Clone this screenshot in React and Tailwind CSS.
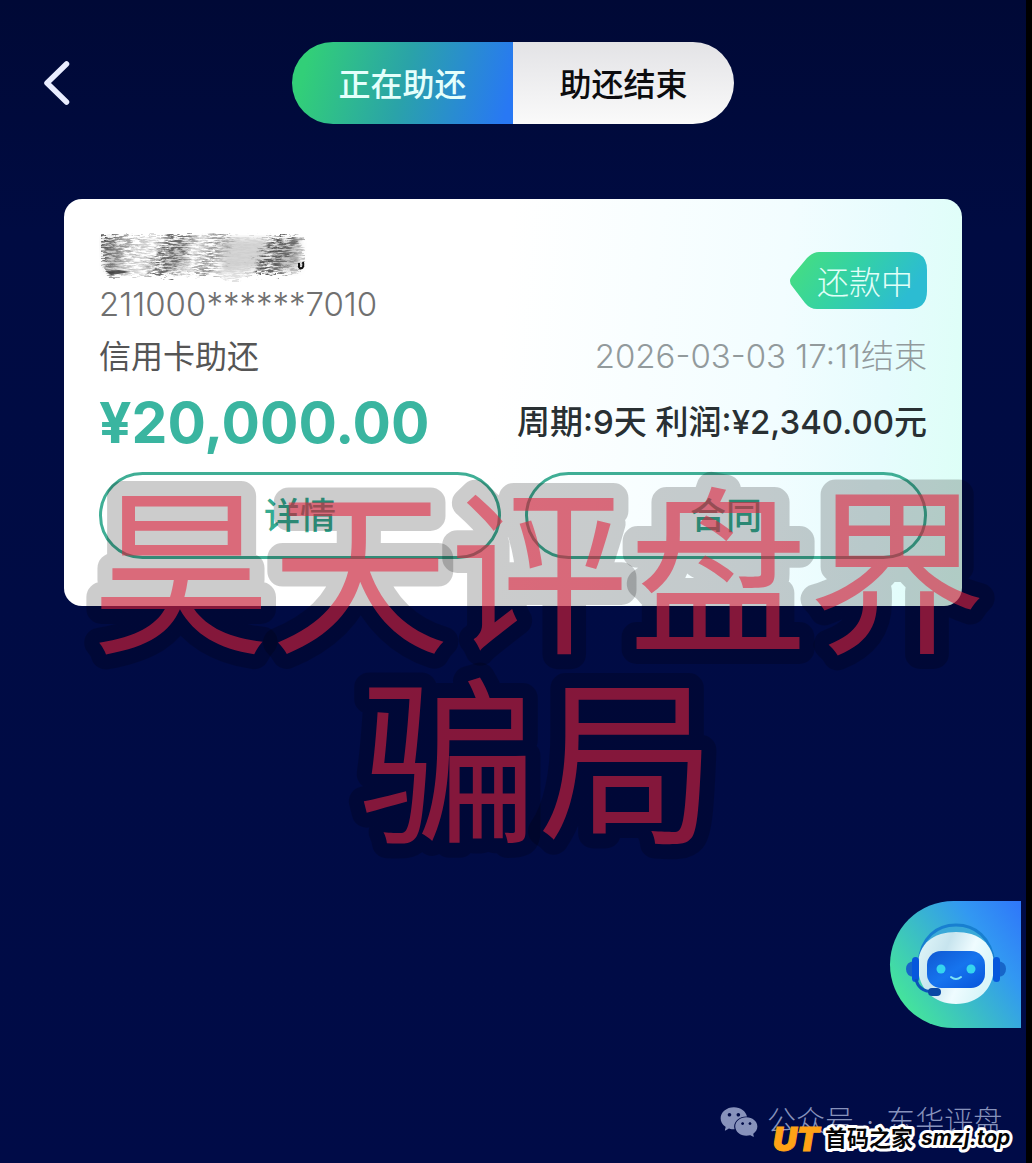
import React, { useState } from 'react';
import { AiFillWechat } from 'react-icons/ai';

const tabs = [
  { key: 'active', label: '正在助还' },
  { key: 'done', label: '助还结束' }
];

const order = {
  account: '211000******7010',
  type: '信用卡助还',
  status: '还款中',
  endTime: '2026-03-03 17:11结束',
  amount: '¥20,000.00',
  summary: '周期:9天 利润:¥2,340.00元'
};

const Header = ({ tab, onChange }) => (
  <header className="flex items-center pt-[42px]">
    <div className="flex-1">
      <button type="button" aria-label="返回" className="ml-10 block">
        <svg width="34" height="50" viewBox="0 0 34 50" fill="none">
          <path d="M26.500 6L7 25L26.500 44" stroke="#e9edff" strokeWidth="5.500" strokeLinecap="round" strokeLinejoin="round" />
        </svg>
      </button>
    </div>
    <div className="flex overflow-hidden rounded-full">
      {tabs.map((t) => (
        <button
          key={t.key}
          type="button"
          onClick={() => onChange(t.key)}
          className={`h-[82px] w-[221px] pt-1 text-[32px] font-medium ${
            tab === t.key
              ? 'bg-[linear-gradient(105deg,#32cf78_8%,#2aa3a8_50%,#2878f4_96%)] text-[#e4fffb]'
              : 'bg-linear-to-b from-[#e3e3e6] to-[#fafafa] text-[#0c0c0e]'
          }`}
        >
          {t.label}
        </button>
      ))}
    </div>
    <div className="flex-1" />
  </header>
);

// Brushed-out card holder name
const MaskedName = () => (
  <svg width="212" height="54" viewBox="0 0 212 54" role="img" aria-label="姓名已隐藏" className="block">
    <defs>
      <filter id="brush" x="0" y="0" width="100%" height="100%">
        <feTurbulence type="fractalNoise" baseFrequency="0.12 0.6" numOctaves="5" seed="8" result="noise" />
        <feColorMatrix in="noise" type="matrix" values="0 0 0 0 0  0 0 0 0 0  0 0 0 0 0  4 0 0 0 -1.400" result="grain" />
        <feDisplacementMap in="SourceGraphic" in2="noise" scale="16" result="rough" />
        <feComposite in="rough" in2="grain" operator="in" />
      </filter>
      <filter id="soft">
        <feGaussianBlur stdDeviation="3" />
      </filter>
      <linearGradient id="brushTone" x1="0" y1="0" x2="1" y2="0.120">
        <stop offset="0" stopColor="#333" stopOpacity="0.9" />
        <stop offset="0.1" stopColor="#555" stopOpacity="0.7" />
        <stop offset="0.2" stopColor="#999" stopOpacity="0.6" />
        <stop offset="0.28" stopColor="#aaa" stopOpacity="0.4" />
        <stop offset="0.35" stopColor="#444" stopOpacity="0.8" />
        <stop offset="0.42" stopColor="#555" stopOpacity="0.8" />
        <stop offset="0.5" stopColor="#bbb" stopOpacity="0.5" />
        <stop offset="0.58" stopColor="#777" stopOpacity="0.8" />
        <stop offset="0.68" stopColor="#ccc" stopOpacity="0.6" />
        <stop offset="0.8" stopColor="#ccc" stopOpacity="0.6" />
        <stop offset="0.87" stopColor="#444" stopOpacity="0.9" />
        <stop offset="0.94" stopColor="#555" stopOpacity="0.8" />
        <stop offset="1" stopColor="#888" stopOpacity="0.5" />
      </linearGradient>
    </defs>
    <g fill="#888" filter="url(#soft)">
      <path d="M4 8H18L24 40H8Z" opacity="0.5" />
      <path d="M74 12L90 8L82 38L62 40Z" opacity="0.5" />
      <path d="M120 8H168V36L124 42Z" opacity="0.35" />
      <path d="M176 10H200V38H174Z" opacity="0.5" />
    </g>
    <path d="M3 5L60 4L120 2L140 6L205 5L206 28L196 42L160 44L128 51L118 44L8 45L6 38L2 34Z" fill="url(#brushTone)" filter="url(#brush)" />
    <path d="M6 40L20 39L32 41L12 44Z" fill="#222" opacity="0.7" />
    <path d="M200 32V36Q201 38 203 37Q205 36 204 31" fill="none" stroke="#111" strokeWidth="2" />
  </svg>
);

const StatusTag = ({ children }) => (
  <div className="relative flex h-[57px] w-[138px] items-center justify-end pr-[14px] text-[32px] font-light text-[#e2fff8]">
    <svg className="absolute inset-0" width="138" height="57" viewBox="0 0 138 57">
      <defs>
        <linearGradient id="tag" x1="0" y1="0" x2="1" y2="0.300">
          <stop offset="0" stopColor="#48df7c" />
          <stop offset="0.5" stopColor="#34d2a4" />
          <stop offset="1" stopColor="#2cbcd2" />
        </linearGradient>
      </defs>
      <path d="M30 0H120Q138 0 138 18V39Q138 57 120 57H28Q21 57 16 51L3 34Q-1 29 3 24L18 6Q24 0 30 0Z" fill="url(#tag)" />
    </svg>
    <span className="relative pt-1">{children}</span>
  </div>
);

const OrderCard = () => (
  <section className="mx-16 mt-[75px] rounded-[18px] bg-[linear-gradient(95deg,#fff_48%,#f2fdff_78%,#e6fcfd_90%,#dcfff6_100%)] px-[35px] pt-8 pb-[47px]">
    <div className="flex items-start justify-between">
      <div>
        <MaskedName />
        <p className="h-[40px] text-[33px] leading-[38px] font-light text-[#707070]">{order.account}</p>
      </div>
      <div className="pt-[21px]">
        <StatusTag>{order.status}</StatusTag>
      </div>
    </div>
    <div className="flex h-16 items-center justify-between">
      <p className="text-[32px] text-[#555]">{order.type}</p>
      <p className="text-[33px] font-light text-[#929a9c]">{order.endTime}</p>
    </div>
    <div className="flex h-[68px] items-center justify-between">
      <p className="text-[57px] leading-[64px] font-bold text-[#3ab5a0]">{order.amount}</p>
      <p className="text-[33px] font-medium text-[#293033]">{order.summary}</p>
    </div>
    <div className="mt-[15px] grid grid-cols-2 gap-6">
      {['详情', '合同'].map((label) => (
        <button key={label} type="button" className="h-[87px] rounded-full border-[3px] border-[#3fae95] text-[36px] font-medium text-[#36ab91]">
          {label}
        </button>
      ))}
    </div>
  </section>
);

const Stamp = () => (
  <svg className="pointer-events-none absolute top-[450px] left-[60px]" width="960" height="440" viewBox="0 0 960 440">
    <g
      fill="rgba(228,35,62,0.58)"
      stroke="rgba(0,0,0,0.2)"
      strokeWidth="30"
      strokeLinejoin="round"
      paintOrder="stroke"
      fontSize="179"
      textAnchor="middle"
      className="font-normal"
    >
      <text x="479" y="190">昊天评盘界</text>
      <text x="478" y="380">骗局</text>
    </g>
  </svg>
);

const Assistant = () => (
  <button
    type="button"
    aria-label="在线客服"
    className="absolute top-[901px] right-[5px] flex h-[127px] w-[131px] items-center rounded-l-full bg-[linear-gradient(55deg,#45e699_12%,#3bbfc4_42%,#3298f2_72%,#2f76fa_100%)] pl-4"
  >
    <svg width="100" height="84" viewBox="0 0 100 84">
      <defs>
        <linearGradient id="face" x1="0" y1="0" x2="1" y2="1">
          <stop offset="0" stopColor="#1058d2" />
          <stop offset="0.5" stopColor="#1674ee" />
          <stop offset="1" stopColor="#0754db" />
        </linearGradient>
        <linearGradient id="head" x1="0" y1="0" x2="1" y2="0.400">
          <stop offset="0" stopColor="#e3f8fa" />
          <stop offset="0.4" stopColor="#c7e4ee" />
          <stop offset="0.7" stopColor="#effcff" />
          <stop offset="1" stopColor="#d9f5f9" />
        </linearGradient>
      </defs>
      <path d="M13 40C15 14 31 2 50 2S85 14 88 40" fill="#3aa9d8" stroke="#187fd0" strokeWidth="3" />
      <path d="M50 9C72 9 88 20 88 43C88 66 72 81 50 81S12 66 12 43C12 20 28 9 50 9Z" fill="url(#head)" />
      <path d="M8 38Q0 39 0 46T8 54Z" fill="#1765c8" />
      <path d="M92 38Q100 39 100 46T92 54Z" fill="#1765c8" />
      <rect x="6" y="34" width="7" height="25" rx="3.500" fill="#0757dc" />
      <rect x="87" y="34" width="7" height="25" rx="3.500" fill="#0757dc" />
      <rect x="21" y="28" width="58" height="37" rx="14" fill="url(#face)" />
      <circle cx="35" cy="46" r="4.500" fill="#35d5ef" />
      <circle cx="65" cy="46" r="4.500" fill="#35d5ef" />
      <path d="M45 54Q50 58 55 54" fill="none" stroke="#7ee4f5" strokeWidth="2" strokeLinecap="round" />
      <path d="M10 56Q12 68 27 69" fill="none" stroke="#0a55b8" strokeWidth="3" />
      <rect x="22" y="65" width="13" height="8" rx="4" fill="#0949a5" />
    </svg>
  </button>
);

const Footer = () => (
  <footer className="absolute right-0 bottom-0 h-[62px] w-[310px]">
    <div className="absolute top-0 left-[2px] flex items-center gap-[7px] text-[#8792bb]">
      <AiFillWechat className="h-[42px] w-[42px]" />
      <span className="flex gap-3 text-[29px] leading-[40px] font-light whitespace-nowrap">
        <span>公众号</span>
        <span>·</span>
        <span>东华评盘</span>
      </span>
    </div>
    <svg className="absolute top-[16px] left-[54px]" width="250" height="42" viewBox="0 0 250 42">
      <text x="3" y="34" fontSize="33" fontStyle="italic" fontWeight="900" fill="#ffa316" stroke="#ffa316" strokeWidth="1">UT</text>
      <g fill="#050505" stroke="#fff" strokeWidth="6" strokeLinejoin="round" paintOrder="stroke" fontWeight="700">
        <text x="55" y="29" fontSize="22">首码之家</text>
        <text x="151" y="28" fontSize="21" fontStyle="italic">smzj.top</text>
      </g>
    </svg>
  </footer>
);

const App = () => {
  const [tab, setTab] = useState('active');

  return (
    <div className="min-h-screen bg-black pr-[6px] font-['Inter','Noto_Sans_CJK_SC',sans-serif]">
      <main className="relative min-h-screen bg-linear-to-b from-[#000936] via-[#000b42] via-20% to-[#000b47]">
        <Header tab={tab} onChange={setTab} />
        <OrderCard />
        <Stamp />
        <Assistant />
        <Footer />
      </main>
    </div>
  );
};

export default App;
